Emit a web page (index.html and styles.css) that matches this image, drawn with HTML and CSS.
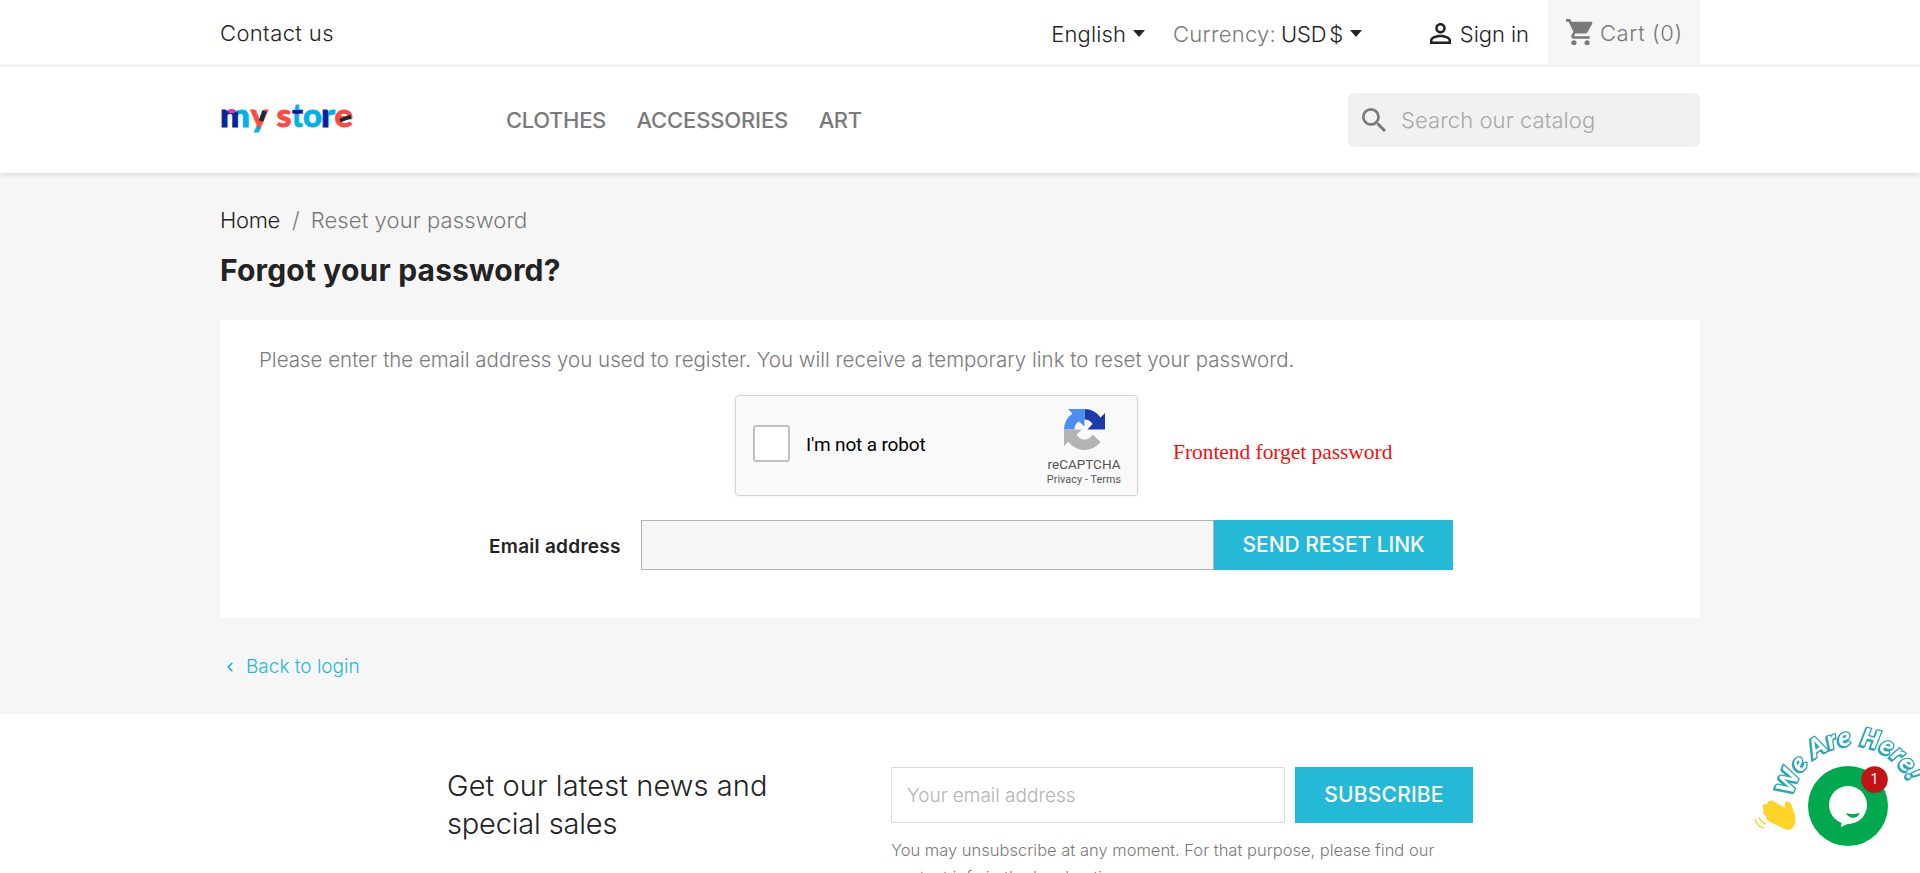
FILE: index.html
```html
<!DOCTYPE html>
<html lang="en">
<head>
  <meta charset="UTF-8">
  <meta name="viewport" content="width=device-width, initial-scale=1.0">
  <title>Reset your password</title>
  <link rel="stylesheet" href="styles.css">
</head>
<body>
  <header>
    <nav class="top-nav">
      <div class="container top-row">
        <a class="contact" href="#">Contact us</a>
        <div class="top-right">
          <a class="language" href="#">English</a><i class="caret"></i>
          <span class="currency-label">Currency:</span>
          <a class="currency" href="#">USD $</a><i class="caret"></i>
          <svg class="icon-user" viewBox="4 4 16 16" width="21" height="21"><path fill="#232323" d="M12 5.9a2.1 2.1 0 1 1 0 4.2 2.1 2.1 0 0 1 0-4.2m0 9c2.97 0 6.1 1.46 6.1 2.1v1.1H5.9V17c0-.64 3.13-2.1 6.1-2.1M12 4C9.79 4 8 5.79 8 8s1.79 4 4 4 4-1.79 4-4-1.79-4-4-4zm0 9c-2.67 0-8 1.34-8 4v3h16v-3c0-2.66-5.33-4-8-4z"/></svg>
          <a class="signin" href="#">Sign in</a>
          <div class="cart">
            <svg viewBox="1 2 20.5 20" width="27" height="26.5"><path fill="#7a7a7a" d="M7 18c-1.1 0-1.99.9-1.99 2S5.9 22 7 22s2-.9 2-2-.9-2-2-2zM1 2v2h2l3.6 7.59-1.35 2.45c-.16.28-.25.61-.25.96 0 1.1.9 2 2 2h12v-2H7.42c-.14 0-.25-.11-.25-.25l.03-.12.9-1.63h7.45c.75 0 1.41-.41 1.75-1.03l3.58-6.49A1 1 0 0 0 20 4H5.21l-.94-2H1zm16 16c-1.1 0-1.99.9-1.99 2s.89 2 1.99 2 2-.9 2-2-.9-2-2-2z"/></svg>
            <span class="cart-text">Cart (0)</span>
          </div>
        </div>
      </div>
    </nav>
    <div class="header-top">
      <div class="container header-row">
        <svg class="logo" viewBox="0 0 134 50" width="134" height="50">
          <defs>
            <linearGradient id="m" x1="0" y1="0" x2="1" y2="0"><stop offset=".6" stop-color="#00259f"/><stop offset=".6" stop-color="#00b1e6"/></linearGradient>
            <linearGradient id="y" gradientUnits="userSpaceOnUse" x1="0" y1="15" x2="0" y2="40"><stop offset=".8" stop-color="#fd4a41"/><stop offset=".8" stop-color="#00b1e6"/></linearGradient>
            <linearGradient id="t" gradientUnits="userSpaceOnUse" x1="0" y1="5" x2="0" y2="33"><stop offset=".48" stop-color="#00b1e6"/><stop offset=".48" stop-color="#1c149f"/><stop offset=".62" stop-color="#1c149f"/><stop offset=".62" stop-color="#00b1e6"/></linearGradient>
            <linearGradient id="r" x1="0" y1="0" x2="1" y2="0"><stop offset=".5" stop-color="#00259f"/><stop offset=".5" stop-color="#00b1e6"/></linearGradient>
          </defs>
          <g class="logo-text">
            <text x="0" y="35" fill="url(#m)" stroke="url(#m)" textLength="30" lengthAdjust="spacingAndGlyphs">m</text>
            <text x="30.5" y="35" fill="url(#y)" stroke="url(#y)" textLength="17.5" lengthAdjust="spacingAndGlyphs">y</text>
            <text x="56.5" y="35" fill="#fd4a41" stroke="#fd4a41" textLength="15" lengthAdjust="spacingAndGlyphs">s</text>
            <text x="72" y="35" fill="url(#t)" stroke="url(#t)" textLength="11" lengthAdjust="spacingAndGlyphs">t</text>
            <text x="83" y="35" fill="#00b1e6" stroke="#00b1e6" textLength="19" lengthAdjust="spacingAndGlyphs">o</text>
            <text x="101" y="35" fill="url(#r)" stroke="url(#r)" textLength="14" lengthAdjust="spacingAndGlyphs">r</text>
            <text x="114.5" y="35" fill="#fd4a41" stroke="#fd4a41" textLength="18.5" lengthAdjust="spacingAndGlyphs">e</text>
          </g>
          <path d="M8.500 20c1.500-1.500 5-1.500 6.500 0" fill="none" stroke="#d63aae" stroke-width="4"/>
          <path d="m44.500 19-3.500 10" stroke="#0d2f38" stroke-width="4.500"/>
          <path d="M120 28.500l11-4" stroke="#0d2f38" stroke-width="3.500"/>
        </svg>
        <ul class="menu">
          <li><a class="m-clothes" href="#">CLOTHES</a></li>
          <li><a class="m-accessories" href="#">ACCESSORIES</a></li>
          <li><a class="m-art" href="#">ART</a></li>
        </ul>
        <div class="search">
          <svg viewBox="3 3 17.5 17.5" width="24" height="24"><path fill="#7a7a7a" d="M15.5 14h-.79l-.28-.27A6.47 6.47 0 0 0 16 9.5 6.5 6.5 0 1 0 9.5 16c1.61 0 3.09-.59 4.23-1.57l.27.28v.79l5 4.99L20.49 19l-4.99-5zm-6 0C7.01 14 5 11.99 5 9.5S7.01 5 9.5 5 14 7.01 14 9.5 11.99 14 9.5 14z"/></svg>
          <span class="search-text">Search our catalog</span>
        </div>
      </div>
    </div>
  </header>

  <main class="container">
    <nav class="breadcrumb"><a class="home" href="#">Home</a><span class="slash">/</span><span class="crumb">Reset your password</span></nav>
    <h1>Forgot your password?</h1>
    <section class="card">
      <p>Please enter the email address you used to register. You will receive a temporary link to reset your password.</p>
      <div class="captcha-row">
        <div class="captcha">
          <span class="checkbox"></span>
          <span class="robot">I'm not a robot</span>
          <div class="captcha-brand">
            <svg viewBox="0 0 41 41" width="41" height="41">
              <path fill="#1c3aa9" d="M41 20.500V4l-4.500 4.500A20 20 0 0 0 20.500 0v10.500c4 0 6.500 1.500 8 4.500l-5 5.500z"/>
              <path fill="#4a8ef5" d="M20.500 0H4l4.500 4.500A20 20 0 0 0 0 20.500h10.500c0-4 1.500-6.500 4.500-8l5.500 5z"/>
              <path fill="#b3b3b3" d="M0 20.500V37l4.300-4.300A20 20 0 0 0 36.500 33l-8-7.500c-2 3.500-4.500 5-8 5-3.500 0-6-1.500-7.800-5l5-5z"/>
            </svg>
            <span class="brand-name">reCAPTCHA</span>
            <span class="brand-links">Privacy - Terms</span>
          </div>
        </div>
        <span class="note">Frontend forget password</span>
      </div>
      <form class="reset-form">
        <label for="email">Email address</label>
        <input id="email" type="email">
        <button type="button">SEND RESET LINK</button>
      </form>
    </section>
    <a class="back" href="#">
      <svg viewBox="0 0 6 10" width="6" height="10"><path d="M5.300.8 1.200 5l4.100 4.200" fill="none" stroke="#24b9d7" stroke-width="1.700"/></svg>
      <span>Back to login</span>
    </a>
  </main>

  <footer>
    <h2><span class="news-1">Get our latest news and</span><br><span class="news-2">special sales</span></h2>
    <div class="newsletter">
      <form class="subscribe-form">
        <input type="email" placeholder="Your email address">
        <button type="button">SUBSCRIBE</button>
      </form>
      <p>You may unsubscribe at any moment. For that purpose, please find our<br>contact info in the legal notice.</p>
    </div>
  </footer>

  <div class="chat">
    <svg viewBox="0 0 170 153" width="170" height="153">
      <path id="arc" d="M43 76A61 61 0 0 1 160 64" fill="none"/>
      <text class="here"><textPath href="#arc" textLength="155">We Are Here!</textPath></text>
      <!-- waving hand -->
      <path fill="#ffd429" d="M20 81c2-1 3 0 4 .5L35.500 88c-1-3-1.500-5 0-6 2.500-1.500 5 0 6 3l3 9c1.500 5 1.500 10-2 14-2 2.500-5 2-8 1L20 102c-2-1.500-5-3.500-3.500-5.500-3.500-2-4-4.500-2.500-6-1.500-2-2-4.500-.5-6 1.500-1 3.500-.5 4-.5-.5-2 .5-3 2.500-3z"/>
      <path d="M5 99c1 4 4 8 9 9M9 97c1 3 3 6 7 7" fill="none" stroke="#f7cf3d" stroke-width="1.300"/>
      <circle cx="98" cy="86" r="40" fill="#00a84f"/>
      <circle cx="98" cy="85" r="19" fill="#fff"/>
      <path fill="#fff" d="M92 98l-1 9 22-10z"/>
      <path fill="#00a84f" d="M96 93c4 1.500 9 1.500 13.500 0-1 6-11 6.500-13.500 0z"/>
      <circle cx="124.500" cy="59.500" r="13.300" fill="#c11414"/>
      <text class="badge" x="124.500" y="64" text-anchor="middle">1</text>
    </svg>
  </div>
</body>
</html>
```
FILE: styles.css
```css
* { box-sizing: border-box; }
body { margin: 0; height: 873px; overflow: hidden; position: relative; background: #f6f6f6; color: #7a7a7a; font-family: Inter, "Open Sans", sans-serif; font-size: 22px; font-weight: 300; line-height: 30px; }
a { color: #232323; text-decoration: none; }
svg { display: block; flex: none; }
span, a { white-space: nowrap; }
header { background: #fff; }
.container { width: 1480px; margin: 0 auto; }

.top-nav { height: 67px; border-bottom: 3px solid #f6f6f6; }
.top-row { display: flex; justify-content: space-between; height: 64px; }
.contact { padding-top: 18px; letter-spacing: 0.37px; }
.top-right { display: flex; align-items: center; }
.language, .currency-label, .currency, .signin { padding-top: 3px; }
.language { letter-spacing: 0.12px; }
.caret { border: 6.5px solid transparent; border-top: 7px solid #232323; border-bottom: 0; margin: 3px 0 0 7px; }
.currency-label { margin-left: 28px; letter-spacing: 0.27px; }
.currency { margin-left: 5px; letter-spacing: -0.25px; word-spacing: -3px; }
.icon-user { margin: 3px 0 0 68px; }
.signin { margin-left: 9px; letter-spacing: -0.05px; }
.cart { display: flex; align-items: center; width: 152px; height: 64px; margin-left: 19px; padding-left: 18px; background: #f6f6f6; }
.cart-text { margin-left: 7px; padding-top: 2px; letter-spacing: 0.6px; }

.header-top { position: relative; height: 106px; box-shadow: 0 2px 5px rgba(0, 0, 0, 0.11); }
.header-row { display: flex; align-items: center; height: 106px; }
.logo { margin-top: -6px; }
.logo-text { font-family: Lato, sans-serif; font-weight: 900; font-size: 33px; stroke-width: 0.8px; }
.menu { display: flex; gap: 30.5px; list-style: none; margin: 0 0 0 152px; padding: 0; font-weight: 500; }
.menu a { color: #7a7a7a; }
.m-clothes { letter-spacing: -0.35px; }
.m-accessories { letter-spacing: -0.15px; }
.m-art { letter-spacing: -0.4px; }
.search { display: flex; align-items: center; width: 352px; height: 54px; margin-left: auto; padding-left: 14px; border-radius: 6px; background: #f1f1f1; }
.search-text { margin-left: 15px; color: #a9a9a9; letter-spacing: 0.08px; }

main { height: 541px; padding-top: 32px; }
.breadcrumb { display: flex; height: 30px; }
.home { letter-spacing: -0.3px; }
.slash { margin: 0 11px 0 12px; }
.crumb { letter-spacing: 0.1px; }
h1 { margin: 16px 0 31px; color: #232323; font-size: 30px; font-weight: 700; line-height: 38px; letter-spacing: 0.18px; }
.card { height: 298px; padding: 25px 39px; background: #fff; }
.card p { margin: 0; font-size: 20.5px; }
.captcha-row { display: flex; margin: 20px 0 0 476px; }
.captcha { display: flex; align-items: center; width: 403px; height: 101px; padding-left: 17px; border: 1.5px solid #d3d3d3; border-radius: 4px; background: #f9f9f9; box-shadow: 0 0 5px rgba(0, 0, 0, 0.08); }
.checkbox { width: 37px; height: 37px; margin-top: -4px; border: 2.5px solid #c1c1c1; border-radius: 3px; background: #fff; }
.robot { margin: -2px 0 0 16px; color: #000; font-family: Roboto, sans-serif; font-size: 19px; font-weight: 400; letter-spacing: -0.15px; }
.captcha-brand { display: flex; flex-direction: column; align-items: center; width: 80px; margin: 5px 13px 0 auto; color: #555; font-family: Roboto, sans-serif; font-weight: 400; }
.brand-name { margin-top: 6px; font-size: 13.5px; line-height: 16px; }
.brand-links { font-size: 10.7px; line-height: 15px; letter-spacing: 0.12px; }
.note { margin: 42px 0 0 35px; color: #f50f0f; font-family: "Liberation Serif", serif; font-size: 21.5px; font-weight: 400; letter-spacing: -0.05px; }
.reset-form { display: flex; align-items: center; margin: 24px 0 0 230px; }
.reset-form label { width: 152px; padding-top: 3px; color: #232323; font-size: 19px; font-weight: 600; letter-spacing: 0.28px; }
.reset-form input { width: 573px; height: 50px; border: 1px solid #b3b3b3; background: #f6f6f6; }
button { height: 50px; padding: 0; border: 0; background: #24b9d7; color: #fff; font: 500 21px/30px Inter, sans-serif; }
.reset-form button { width: 239px; letter-spacing: -0.05px; }
.back { display: flex; align-items: center; gap: 13px; margin: 34px 0 0 7px; color: #24b9d7; font-size: 19px; }

footer { display: flex; height: 159px; padding: 53px 0 0 447px; background: #fff; }
h2 { width: 444px; margin: 0; color: #232323; font-size: 29px; font-weight: 300; line-height: 37.5px; }
.news-1 { letter-spacing: 0.1px; }
.news-2 { letter-spacing: -0.18px; }
.subscribe-form { display: flex; gap: 10px; }
.subscribe-form input { width: 394px; height: 56px; padding: 0 15px; border: 1px solid #ddd; background: #fff; font: 300 19px Inter, sans-serif; }
.subscribe-form input::placeholder { color: #b3b3b3; }
.subscribe-form button { width: 178px; height: 56px; letter-spacing: 0.2px; }
.newsletter p { margin: 13.5px 0 0; font-size: 16.5px; line-height: 27px; }

.chat { position: absolute; left: 1750px; top: 720px; }
.here { font: italic 900 25px Lato, sans-serif; fill: #fff; stroke: #2ba6b4; stroke-width: 2.6px; paint-order: stroke; filter: drop-shadow(-0.7px 1.5px 0 #2ba6b4); }
.badge { font: 400 14px Roboto, sans-serif; fill: #fff; }
```
